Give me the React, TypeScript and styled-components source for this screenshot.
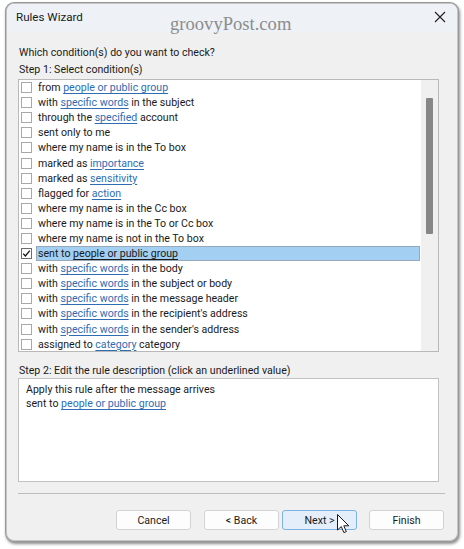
import styled, { createGlobalStyle } from 'styled-components';

const GlobalStyle = createGlobalStyle`
  html, body {
    margin: 0;
    padding: 0;
    background: #ffffff;
  }
  body {
    font-family: Roboto, "Noto Sans", sans-serif;
    font-size: 10.6px;
    color: #1a1a1a;
  }
`;

const StyledPage = styled.div`
  width: 464px;
  height: 549px;
  padding: 3px 6px 0 6px;
  box-sizing: border-box;
`;

const StyledWindow = styled.div`
  position: relative;
  width: 452px;
  height: 538px;
  box-sizing: border-box;
  display: flex;
  flex-direction: column;
  background: #f0f0f0;
  border: 1px solid #c4c4c4;
  border-radius: 8px;
  box-shadow: 0 0 0 1px #9a9a9a, 1px 2px 3px 1px rgba(0, 0, 0, 0.45);
  overflow: hidden;
`;

const StyledTitleBar = styled.div`
  display: flex;
  align-items: center;
  justify-content: space-between;
  height: 28px;
  box-sizing: border-box;
  padding: 0 11px 1px 9px;
  background: #eef2f7;
  font-size: 11.6px;
`;

const StyledCloseButton = styled.div`
  display: flex;
  width: 12px;
  height: 12px;
`;

const StyledWatermark = styled.div`
  position: absolute;
  left: 163px;
  top: 9px;
  font-family: "Liberation Serif", "DejaVu Serif", serif;
  font-size: 18.6px;
  color: #8c8c8c;
  pointer-events: none;
`;

const StyledBody = styled.div`
  display: flex;
  flex-direction: column;
  flex-grow: 1;
  padding: 11px 13px 10px 11px;
`;

const StyledLabel = styled.div`
  padding: 2px 0 0 1px;
  line-height: 15.5px;
  white-space: nowrap;
`;

const StyledListBox = styled.div`
  display: flex;
  height: 273px;
  margin: 1px 5px 0 0;
  box-sizing: border-box;
  border: 1px solid #b9b9b9;
  background: #ffffff;
  overflow: hidden;
`;

const StyledRows = styled.div`
  display: flex;
  flex-direction: column;
  flex-grow: 1;
  padding-top: 0.5px;
`;

const StyledRow = styled.div`
  display: flex;
  align-items: center;
  height: 15.1px;
  flex-shrink: 0;
  padding-left: 2px;
  padding-right: 1px;
  white-space: nowrap;
`;

const StyledCheckbox = styled.div<{ $checked?: boolean }>`
  display: flex;
  align-items: center;
  justify-content: center;
  width: 11px;
  height: 11px;
  box-sizing: border-box;
  flex-shrink: 0;
  margin-right: 4px;
  border: 1px solid ${(p) => (p.$checked ? '#6d6d6d' : '#a8a8a8')};
  background: #ffffff;
`;

const StyledRowText = styled.div<{ $selected?: boolean }>`
  flex-grow: 1;
  height: 15px;
  line-height: 12px;
  box-sizing: border-box;
  padding: 1px 0 0 1px;
  border: 1px solid ${(p) => (p.$selected ? '#98a9ba' : 'transparent')};
  background: ${(p) => (p.$selected ? '#a2cff2' : 'transparent')};
`;

const StyledLink = styled.span<{ $selected?: boolean }>`
  color: ${(p) => (p.$selected ? '#1a1a1a' : '#2f6db3')};
  text-decoration: underline;
  text-underline-offset: 1.5px;
  cursor: pointer;
`;

const StyledScrollTrack = styled.div`
  width: 17px;
  flex-shrink: 0;
  display: flex;
  justify-content: center;
  padding-top: 18px;
  background: #f0f0f0;
`;

const StyledScrollThumb = styled.div`
  width: 7px;
  height: 136px;
  background: #878787;
  border-radius: 1px;
`;

const StyledStep2Label = styled(StyledLabel)`
  margin-top: 9px;
`;

const StyledDescriptionBox = styled.div`
  height: 104px;
  margin-right: 5px;
  box-sizing: border-box;
  border: 1px solid #c2c2c2;
  background: #ffffff;
  padding: 3.5px 7px;
  line-height: 14.3px;
`;

const StyledSeparator = styled.div`
  height: 1px;
  margin-top: 11px;
  margin-right: -1px;
  background: #bdbdbd;
`;

const StyledButtonRow = styled.div`
  display: flex;
  justify-content: flex-end;
  margin-top: 16px;
`;

const StyledButton = styled.div<{ $default?: boolean; $gap: number }>`
  position: relative;
  display: flex;
  align-items: center;
  justify-content: center;
  width: 75px;
  height: 20px;
  box-sizing: border-box;
  padding-top: 1px;
  margin-left: ${(p) => p.$gap}px;
  border: 1px solid ${(p) => (p.$default ? '#7fb2e6' : '#d3d3d3')};
  border-radius: 3px;
  background: ${(p) => (p.$default ? '#e3eefa' : '#fdfdfd')};
  cursor: default;
`;

const StyledCursor = styled.svg`
  position: absolute;
  left: 54px;
  top: 3px;
`;

type Part = string | { link: string };

const conditions: Part[][] = [
  ['from ', { link: 'people or public group' }],
  ['with ', { link: 'specific words' }, ' in the subject'],
  ['through the ', { link: 'specified' }, ' account'],
  ['sent only to me'],
  ['where my name is in the To box'],
  ['marked as ', { link: 'importance' }],
  ['marked as ', { link: 'sensitivity' }],
  ['flagged for ', { link: 'action' }],
  ['where my name is in the Cc box'],
  ['where my name is in the To or Cc box'],
  ['where my name is not in the To box'],
  ['sent to ', { link: 'people or public group' }],
  ['with ', { link: 'specific words' }, ' in the body'],
  ['with ', { link: 'specific words' }, ' in the subject or body'],
  ['with ', { link: 'specific words' }, ' in the message header'],
  ['with ', { link: 'specific words' }, " in the recipient's address"],
  ['with ', { link: 'specific words' }, " in the sender's address"],
  ['assigned to ', { link: 'category' }, ' category'],
];

const SELECTED = 11;

const renderParts = (parts: Part[], selected?: boolean) =>
  parts.map((part, i) =>
    typeof part === 'string' ? (
      <span key={i}>{part}</span>
    ) : (
      <StyledLink key={i} $selected={selected}>
        {part.link}
      </StyledLink>
    )
  );

const App = () => {
  return (
    <StyledPage>
      <GlobalStyle />
      <StyledWindow>
        <StyledTitleBar>
          <span>Rules Wizard</span>
          <StyledCloseButton>
            <svg width="12" height="12" viewBox="0 0 12 12">
              <path d="M1 1 L11 11 M11 1 L1 11" stroke="#1f1f1f" strokeWidth="1.1" fill="none" />
            </svg>
          </StyledCloseButton>
        </StyledTitleBar>
        <StyledWatermark>groovyPost.com</StyledWatermark>
        <StyledBody>
          <StyledLabel>Which condition(s) do you want to check?</StyledLabel>
          <StyledLabel>Step 1: Select condition(s)</StyledLabel>
          <StyledListBox>
            <StyledRows>
              {conditions.map((parts, i) => (
                <StyledRow key={i}>
                  <StyledCheckbox $checked={i === SELECTED}>
                    {i === SELECTED && (
                      <svg width="9" height="9" viewBox="0 0 9 9">
                        <path d="M1.2 4.6 L3.4 7 L7.8 1.6" stroke="#111" strokeWidth="1.3" fill="none" />
                      </svg>
                    )}
                  </StyledCheckbox>
                  <StyledRowText $selected={i === SELECTED}>
                    {renderParts(parts, i === SELECTED)}
                  </StyledRowText>
                </StyledRow>
              ))}
            </StyledRows>
            <StyledScrollTrack>
              <StyledScrollThumb />
            </StyledScrollTrack>
          </StyledListBox>
          <StyledStep2Label>
            Step 2: Edit the rule description (click an underlined value)
          </StyledStep2Label>
          <StyledDescriptionBox>
            <div>Apply this rule after the message arrives</div>
            <div>
              sent to <StyledLink>people or public group</StyledLink>
            </div>
          </StyledDescriptionBox>
          <StyledSeparator />
          <StyledButtonRow>
            <StyledButton $gap={0}>Cancel</StyledButton>
            <StyledButton $gap={13}>&lt; Back</StyledButton>
            <StyledButton $gap={3} $default>
              Next &gt;
              <StyledCursor width="13" height="20" viewBox="0 0 13 20">
                <path
                  d="M0.5 0.5 L0.5 16 L4.3 12.6 L6.9 18.6 L9.3 17.6 L6.8 11.8 L11.8 11.8 Z"
                  fill="#ffffff"
                  stroke="#1a1a1a"
                  strokeWidth="1"
                  strokeLinejoin="round"
                />
              </StyledCursor>
            </StyledButton>
            <StyledButton $gap={12}>Finish</StyledButton>
          </StyledButtonRow>
        </StyledBody>
      </StyledWindow>
    </StyledPage>
  );
};

export default App;
